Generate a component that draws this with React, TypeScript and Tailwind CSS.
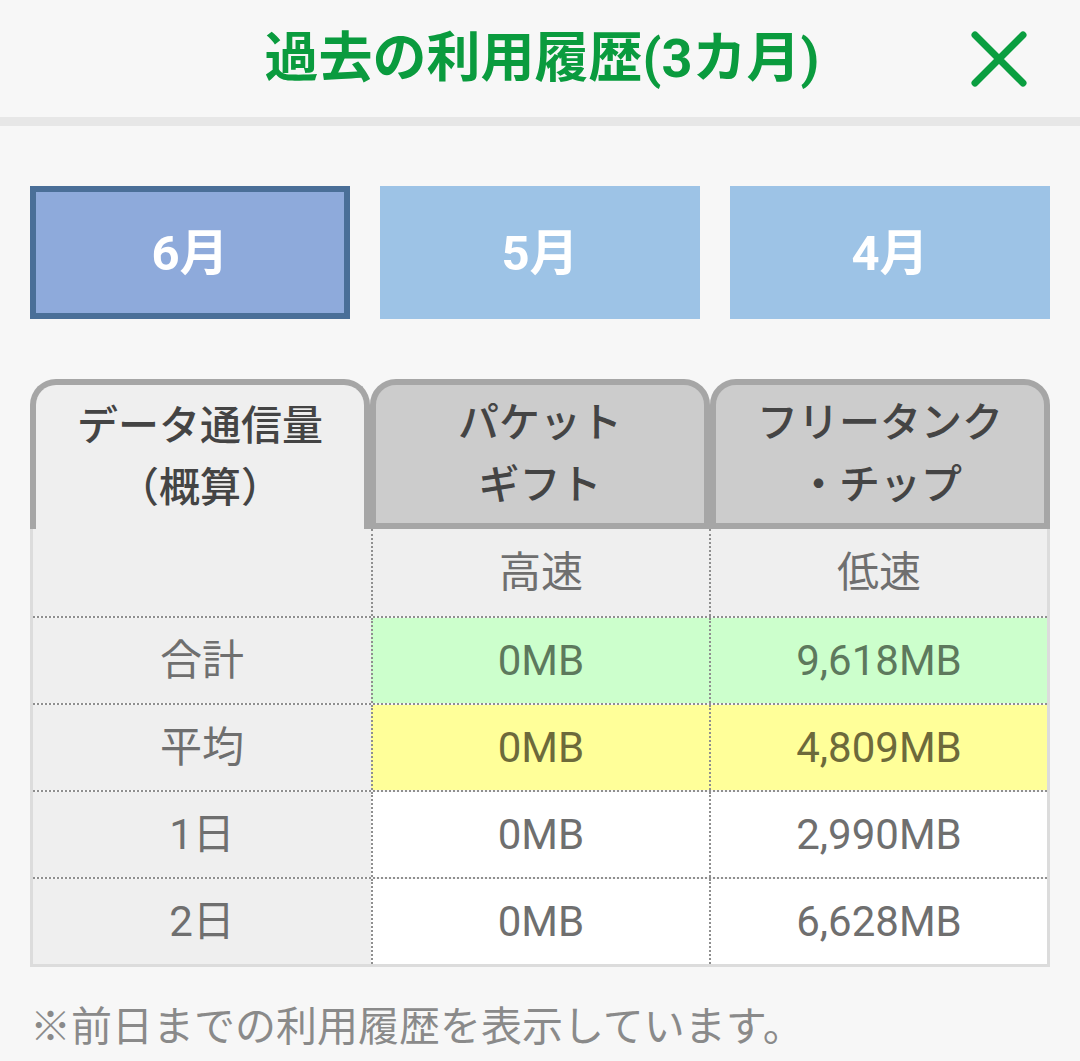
const font = { fontFamily: "Roboto, 'Noto Sans CJK JP', sans-serif" }

const months = ["6月", "5月", "4月"]

const tabs = [
  { lines: ["データ通信量", "（概算）"], active: true },
  { lines: ["パケット", "ギフト"], active: false },
  { lines: ["フリータンク", "・チップ"], active: false },
]

type Row = { label: string; high: string; low: string; tone: "green" | "yellow" | "plain" }

const rows: Row[] = [
  { label: "合計", high: "0MB", low: "9,618MB", tone: "green" },
  { label: "平均", high: "0MB", low: "4,809MB", tone: "yellow" },
  { label: "1日", high: "0MB", low: "2,990MB", tone: "plain" },
  { label: "2日", high: "0MB", low: "6,628MB", tone: "plain" },
]

function CloseIcon() {
  return (
    <svg width="56" height="56" viewBox="0 0 56 56" fill="none">
      <path d="M4 4 L52 52 M52 4 L4 52" stroke="#0a9e40" strokeWidth="7" strokeLinecap="round" />
    </svg>
  )
}

function toneClass(tone: Row["tone"]) {
  if (tone === "green") return "bg-[#ccffcc] text-[#5d795d]"
  if (tone === "yellow") return "bg-[#ffff99] text-[#6d6a3b]"
  return "bg-white text-[#6f6f6f]"
}

export default function App() {
  return (
    <div className="min-h-[1061px] w-[1080px] bg-[#f7f7f7]" style={font}>
      <header className="grid h-[126px] grid-cols-[1fr_auto_1fr] items-center border-b-[9px] border-[#e7e7e7] bg-[#f7f7f7]">
        <div />
        <h1 className="pl-[4px] text-[54px] font-bold leading-none text-[#0a9b3e]">過去の利用履歴(3カ月)</h1>
        <div className="flex justify-end pr-[53px]">
          <CloseIcon />
        </div>
      </header>

      <main className="px-[30px] pt-[60px]">
        <div className="grid grid-cols-3 gap-[30px]">
          {months.map((m, i) => (
            <div
              key={m}
              className={
                i === 0
                  ? "flex h-[133px] items-center justify-center border-[6px] border-[#4a6f98] bg-[#8eaadb] pt-[2px] text-[49px] font-bold text-white"
                  : "flex h-[133px] items-center justify-center bg-[#9dc3e6] pt-[2px] text-[49px] font-bold text-white"
              }
            >
              {m}
            </div>
          ))}
        </div>

        <div className="mt-[60px] grid grid-cols-3">
          {tabs.map((t) => (
            <div
              key={t.lines[0]}
              className={
                t.active
                  ? "flex h-[150px] flex-col items-center justify-center rounded-t-[26px] border-[6px] border-b-0 border-[#a6a6a6] bg-[#efefef] text-[41px] font-medium leading-[62px] text-[#444444]"
                  : "flex h-[150px] flex-col items-center justify-center rounded-t-[26px] border-[6px] border-[#a6a6a6] bg-[#cccccc] text-[41px] font-medium leading-[62px] text-[#444444]"
              }
            >
              {t.lines.map((l) => (
                <span key={l}>{l}</span>
              ))}
            </div>
          ))}
        </div>

        <div className="border-[3px] border-t-0 border-[#dcdcdc] text-[42px] text-[#6f6f6f]">
          <div className="grid h-[87px] grid-cols-3 bg-[#efefef]">
            <div />
            <div className="flex items-center justify-center border-l-2 border-dotted border-[#8f8f8f]">高速</div>
            <div className="flex items-center justify-center border-l-2 border-dotted border-[#8f8f8f]">低速</div>
          </div>
          {rows.map((r) => (
            <div key={r.label} className="grid h-[87px] grid-cols-3 border-t-2 border-dotted border-[#8f8f8f]">
              <div className="flex items-center justify-center bg-[#efefef]">{r.label}</div>
              <div className={`flex items-center justify-center border-l-2 border-dotted border-[#8f8f8f] ${toneClass(r.tone)}`}>
                {r.high}
              </div>
              <div className={`flex items-center justify-center border-l-2 border-dotted border-[#8f8f8f] ${toneClass(r.tone)}`}>
                {r.low}
              </div>
            </div>
          ))}
        </div>

        <p className="mt-[30px] text-[41px] leading-[60px] text-[#8a8a8a]">※前日までの利用履歴を表示しています。</p>
      </main>
    </div>
  )
}
